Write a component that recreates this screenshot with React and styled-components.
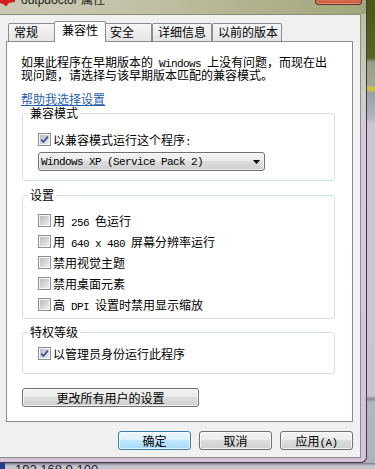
import styled, { createGlobalStyle } from "styled-components";

const GlobalStyle = createGlobalStyle`
  html, body {
    margin: 0;
    padding: 0;
  }
  body {
    font-family: "Noto Sans CJK SC", "Liberation Sans", sans-serif;
    font-size: 12px;
    color: #000;
    background: #fff;
  }
`;

const Screen = styled.div`
  width: 375px;
  height: 469px;
  overflow: hidden;
  display: flex;
  flex-direction: column;
  background: linear-gradient(
    180deg,
    #4b551b 0,
    #5a6427 58px,
    #9a9c8a 62px,
    #a5a695 86px,
    #d4c24c 87px,
    #cdbd52 91px,
    #9aa0a8 92px,
    #b4b2bc 118px,
    #cdc6d2 124px,
    #cbc4d0 396px,
    #8a8a94 399px,
    #b6b6be 402px,
    #b0b0b8 100%
  );
`;

const Window = styled.div`
  width: 367px;
  height: 463px;
  box-sizing: border-box;
  flex-shrink: 0;
  display: flex;
  flex-direction: column;
  border-right: 1px solid #3f3a46;
  border-bottom: 1px solid #3f3a46;
  border-bottom-right-radius: 6px;
  overflow: hidden;
  background: linear-gradient(
    180deg,
    #b9bc9a 0,
    #c9cbb6 70px,
    #d2ced2 110px,
    #d9c7dd 140px,
    #d6c3da 100%
  );
`;

const TitleBar = styled.div`
  height: 14px;
  flex-shrink: 0;
  display: flex;
  align-items: flex-start;
  overflow: hidden;
  background: linear-gradient(90deg, #cac9b5 0%, #c3c2a8 35%, #aeb08a 75%, #a0a67b 100%);
`;

const Title = styled.span`
  margin: -6px 0 0 5px;
  font-family: "Liberation Sans", "Noto Sans CJK SC", sans-serif;
  font-size: 12px;
  line-height: 12px;
  color: #1c1c14;
  white-space: nowrap;
`;

const CloseButton = styled.div`
  margin-left: auto;
  margin-right: 4px;
  width: 47px;
  height: 5px;
  box-sizing: border-box;
  border: 1px solid #6b2c1e;
  border-top: none;
  border-radius: 0 0 4px 4px;
  background: linear-gradient(180deg, #d7714f, #c24b2e);
  box-shadow: inset 0 -1px 0 #e89a7c;
`;

const Client = styled.div`
  width: 361px;
  height: 444px;
  box-sizing: border-box;
  flex-shrink: 0;
  padding: 6px 7px 0 6px;
  background: #f0f0f0;
  border-top: 1px solid #8b8f7e;
  border-right: 1px solid #8d8d8d;
  border-bottom: 1px solid #8d8d8d;
`;

const TabStrip = styled.div`
  display: flex;
  align-items: flex-end;
  height: 21px;
  margin: 0 0 -1px 2px;
  position: relative;
  z-index: 1;
`;

const Tab = styled.div`
  box-sizing: border-box;
  width: ${(p) => p.$w}px;
  height: ${(p) => (p.$active ? 21 : 18)}px;
  margin: ${(p) => (p.$active ? "0 -2px" : "0 0 1px")};
  padding-left: ${(p) => (p.$active ? 7 : 5)}px;
  line-height: 16px;
  white-space: nowrap;
  border: 1px solid #898c95;
  border-bottom: none;
  border-radius: 2px 2px 0 0;
  background: ${(p) =>
    p.$active ? "#fff" : "linear-gradient(180deg, #f6f6f6, #e4e4e4)"};
  position: relative;
  z-index: ${(p) => (p.$active ? 2 : 1)};
`;

const Panel = styled.div`
  box-sizing: border-box;
  background: #fff;
  border: 1px solid #898c95;
  padding: 14px 17px 14px 15px;
`;

const Latin = styled.span`
  font-family: "Liberation Mono", monospace;
  font-size: 11px;
  line-height: 10px;
  letter-spacing: -0.6px;
  white-space: pre;
`;

const Desc = styled.p`
  margin: 0 0 0 -1px;
  line-height: 12px;
  white-space: nowrap;
`;

const HelpLink = styled.a`
  display: block;
  width: max-content;
  margin: 12px 0 0 -1px;
  line-height: 12px;
  color: #1f5fb0;
  text-decoration: underline;
  text-underline-offset: 1px;
`;

const Group = styled.fieldset`
  margin: ${(p) => p.$mt}px 0 0;
  padding: 0;
  min-width: 0;
  border: 1px solid #d5dfe5;
  border-radius: 3px;
`;

const Legend = styled.legend`
  margin-left: 5px;
  padding: 0 2px;
  line-height: 12px;
`;

const GroupBody = styled.div`
  display: flex;
  flex-direction: column;
  gap: 8px;
  padding: ${(p) => p.$pt}px 0 ${(p) => p.$pb}px 15px;
`;

const Row = styled.label`
  display: flex;
  align-items: center;
  gap: 2px;
  height: 13px;
  line-height: 13px;
  white-space: nowrap;
`;

const Box = styled.span`
  width: 13px;
  height: 13px;
  box-sizing: border-box;
  flex-shrink: 0;
  padding: 1px;
  border: 1px solid #8e8f8f;
  background: linear-gradient(135deg, #b8bbc0, #eeeeef) content-box, #f7f7f7;
  display: flex;
  align-items: center;
  justify-content: center;
`;

const Dropdown = styled.div`
  width: 227px;
  height: 19px;
  box-sizing: border-box;
  margin-top: 6px;
  display: flex;
  align-items: center;
  justify-content: space-between;
  padding: 0 4px 0 2px;
  border: 1px solid #707070;
  border-radius: 3px;
  background: linear-gradient(180deg, #f2f2f2 0, #ebebeb 50%, #dddddd 50%, #cfcfcf 100%);
  box-shadow: inset 0 0 0 1px rgba(255, 255, 255, 0.6);
`;

const Button = styled.button`
  box-sizing: border-box;
  width: ${(p) => p.$w}px;
  height: 19px;
  margin-top: ${(p) => p.$mt || 0}px;
  padding: 0;
  font-family: inherit;
  font-size: 12px;
  line-height: 17px;
  color: #000;
  border: 1px solid ${(p) => (p.$primary ? "#3c7fb1" : "#707070")};
  border-radius: 3px;
  background: ${(p) =>
    p.$primary
      ? "linear-gradient(180deg, #eaf6fd 0, #d9f0fc 50%, #bee6fd 50%, #a7d9f5 100%)"
      : "linear-gradient(180deg, #f2f2f2 0, #ebebeb 50%, #dddddd 50%, #cfcfcf 100%)"};
  box-shadow: inset 0 0 0 1px rgba(255, 255, 255, 0.7);
  white-space: nowrap;
`;

const Footer = styled.div`
  display: flex;
  justify-content: flex-end;
  gap: 8px;
  margin-top: 9px;
`;

const Taskbar = styled.div`
  height: 6px;
  flex-shrink: 0;
  display: flex;
  align-items: flex-start;
  overflow: hidden;
  background: linear-gradient(180deg, #7a7a88, #c6c6ce 3px);
`;

const TaskIcon = styled.span`
  width: 5px;
  height: 6px;
  background: #1d3f8f;
`;

const TaskText = styled.span`
  margin-left: 10px;
  font-family: "Liberation Sans", sans-serif;
  font-size: 13px;
  line-height: 13px;
  color: #1a1a2a;
`;

function Check({ checked }) {
  return (
    <Box>
      {checked && (
        <svg width="9" height="9" viewBox="0 0 9 9">
          <path d="M1.2 4.6 L3.5 7 L7.9 1.6" fill="none" stroke="#3e52a0" strokeWidth="1.8" />
        </svg>
      )}
    </Box>
  );
}

function Option({ checked, children }) {
  return (
    <Row>
      <Check checked={checked} />
      <span>{children}</span>
    </Row>
  );
}

const tabs = [
  { label: "常规", w: 48 },
  { label: "兼容性", w: 52, active: true },
  { label: "安全", w: 48 },
  { label: "详细信息", w: 60 },
  { label: "以前的版本", w: 70 },
];

export default function App() {
  return (
    <>
      <GlobalStyle />
      <Screen>
        <Window>
          <TitleBar>
            <svg width="16" height="7" viewBox="0 0 16 7">
              <polygon points="0,0 15,0 15,2 9,3 6,6.5 3,4 0,3" fill="#d42020" />
            </svg>
            <Title>outpdoctor 属性</Title>
            <CloseButton />
          </TitleBar>
          <Client>
            <TabStrip>
              {tabs.map((t) => (
                <Tab key={t.label} $w={t.w} $active={t.active}>
                  {t.label}
                </Tab>
              ))}
            </TabStrip>
            <Panel>
              <Desc>
                如果此程序在早期版本的<Latin> Windows </Latin>上没有问题，而现在出
                <br />
                现问题，请选择与该早期版本匹配的兼容模式。
              </Desc>
              <HelpLink>帮助我选择设置</HelpLink>

              <Group $mt={2}>
                <Legend>兼容模式</Legend>
                <GroupBody $pt={14} $pb={9}>
                  <div>
                    <Option checked>
                      以兼容模式运行这个程序<Latin>:</Latin>
                    </Option>
                    <Dropdown>
                      <Latin>Windows XP (Service Pack 2)</Latin>
                      <svg width="7" height="4" viewBox="0 0 7 4">
                        <polygon points="0,0 7,0 3.5,4" fill="#000" />
                      </svg>
                    </Dropdown>
                  </div>
                </GroupBody>
              </Group>

              <Group $mt={8}>
                <Legend>设置</Legend>
                <GroupBody $pt={13} $pb={7}>
                  <Option>
                    用<Latin> 256 </Latin>色运行
                  </Option>
                  <Option>
                    用<Latin> 640 x 480 </Latin>屏幕分辨率运行
                  </Option>
                  <Option>禁用视觉主题</Option>
                  <Option>禁用桌面元素</Option>
                  <Option>
                    高<Latin> DPI </Latin>设置时禁用显示缩放
                  </Option>
                </GroupBody>
              </Group>

              <Group $mt={7}>
                <Legend>特权等级</Legend>
                <GroupBody $pt={9} $pb={13}>
                  <Option checked>以管理员身份运行此程序</Option>
                </GroupBody>
              </Group>

              <Button $w={177} $mt={14}>
                更改所有用户的设置
              </Button>
            </Panel>
            <Footer>
              <Button $w={73} $primary>
                确定
              </Button>
              <Button $w={73}>取消</Button>
              <Button $w={73}>
                应用<Latin>(A)</Latin>
              </Button>
            </Footer>
          </Client>
        </Window>
        <Taskbar>
          <TaskIcon />
          <TaskText>192.168.0.100</TaskText>
        </Taskbar>
      </Screen>
    </>
  );
}
